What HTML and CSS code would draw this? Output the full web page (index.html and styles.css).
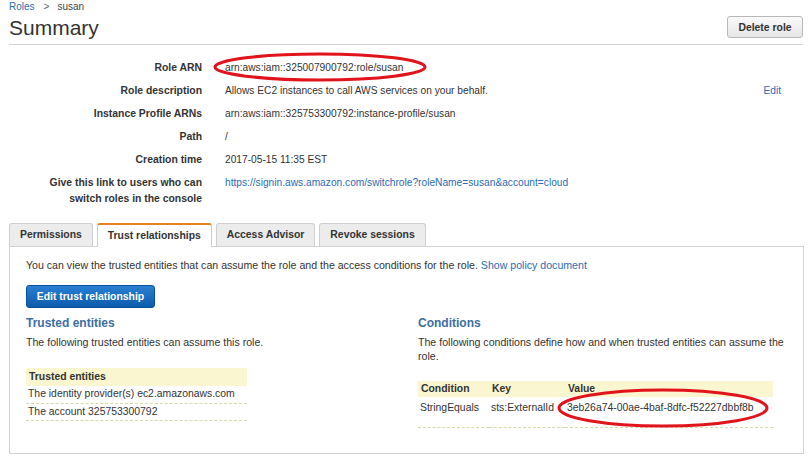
FILE: index.html
```html
<!DOCTYPE html>
<html lang="en">
<head>
<meta charset="utf-8">
<title>Summary</title>
<link rel="stylesheet" href="styles.css">
</head>
<body>
<div class="page">
  <div class="crumbs"><a class="link" href="#">Roles</a><span class="sep">&gt;</span><span>susan</span></div>
  <div class="title-row">
    <h1 class="title">Summary</h1>
    <button class="btn-gray">Delete role</button>
  </div>

  <div class="details">
    <div class="row"><div class="lbl">Role ARN</div><div class="val">arn:aws:iam::325007900792:role/susan</div><div class="act"></div></div>
    <div class="row"><div class="lbl">Role description</div><div class="val">Allows EC2 instances to call AWS services on your behalf.</div><div class="act"><a class="link" href="#">Edit</a></div></div>
    <div class="row"><div class="lbl">Instance Profile ARNs</div><div class="val">arn:aws:iam::325753300792:instance-profile/susan</div><div class="act"></div></div>
    <div class="row"><div class="lbl">Path</div><div class="val">/</div><div class="act"></div></div>
    <div class="row"><div class="lbl">Creation time</div><div class="val">2017-05-15 11:35 EST</div><div class="act"></div></div>
    <div class="row"><div class="lbl">Give this link to users who can switch roles in the console</div><div class="val"><a class="link" href="#">https://signin.aws.amazon.com/switchrole?roleName=susan&amp;account=cloud</a></div><div class="act"></div></div>
  </div>

  <div class="tabs">
    <div class="tab">Permissions</div>
    <div class="tab active">Trust relationships</div>
    <div class="tab">Access Advisor</div>
    <div class="tab">Revoke sessions</div>
  </div>
  <div class="panel">
    <p class="intro">You can view the trusted entities that can assume the role and the access conditions for the role. <a class="link" href="#">Show policy document</a></p>
    <button class="btn-blue">Edit trust relationship</button>
    <div class="cols">
      <div class="col">
        <h2 class="sub">Trusted entities</h2>
        <p class="desc">The following trusted entities can assume this role.</p>
        <table class="tbl tbl-left">
          <thead><tr><th>Trusted entities</th></tr></thead>
          <tbody>
            <tr><td>The identity provider(s) ec2.amazonaws.com</td></tr>
            <tr><td>The account 325753300792</td></tr>
          </tbody>
        </table>
      </div>
      <div class="col">
        <h2 class="sub">Conditions</h2>
        <p class="desc">The following conditions define how and when trusted entities can assume the role.</p>
        <table class="tbl tbl-right">
          <thead><tr><th class="c1">Condition</th><th class="c2">Key</th><th>Value</th></tr></thead>
          <tbody>
            <tr class="tall"><td>StringEquals</td><td>sts:ExternalId</td><td>3eb26a74-00ae-4baf-8dfc-f52227dbbf8b</td></tr>
          </tbody>
        </table>
      </div>
    </div>
  </div>
</div>
<svg class="marks" width="812" height="461" viewBox="0 0 812 461" aria-hidden="true">
  <ellipse cx="320" cy="67" rx="105" ry="13" fill="none" stroke="#e1141c" stroke-width="3"/>
  <ellipse cx="663" cy="408" rx="104" ry="18" fill="none" stroke="#e1141c" stroke-width="3"/>
</svg>
</body>
</html>
```
FILE: styles.css
```css
* { box-sizing: border-box; }
html, body { margin: 0; padding: 0; background: #fff; }
body {
  font-family: "Liberation Sans", Arial, Helvetica, sans-serif;
  font-size: 10.2px;
  color: #333;
  position: relative;
  width: 812px;
  height: 461px;
  overflow: hidden;
}
.page { padding: 0 9px; }
.link { color: #2b6cb6; text-decoration: none; }

.crumbs { font-size: 10px; line-height: 14px; height: 14px; color: #444; }
.crumbs .sep { margin: 0 8px 0 9px; color: #666; }

.title-row {
  display: flex;
  justify-content: space-between;
  align-items: center;
  height: 31px;
  border-bottom: 1px solid #d3d3d3;
}
.title { margin: 0; font-size: 21px; font-weight: normal; color: #333; line-height: 28px; position: relative; top: -1px; }
.btn-gray {
  font-family: inherit;
  font-size: 10.4px;
  font-weight: bold;
  color: #333;
  height: 22px;
  width: 76px;
  padding: 0;
  border: 1px solid #b8b8b8;
  border-radius: 3px;
  background: linear-gradient(#fafafa, #e6e6e6);
  position: relative;
  top: -2px;
}

.details { margin-top: 11px; }
.row {
  display: grid;
  grid-template-columns: 193px 1fr auto;
  column-gap: 23px;
  padding: 4px 22px 4px 0;
  line-height: 15px;
}
.row:last-child { line-height: 16px; padding-top: 4px; }
.lbl { font-weight: bold; font-size: 10.4px; text-align: right; color: #333; }
.row:last-child .lbl { padding-left: 36px; }
.val { color: #333; }

.tabs { display: flex; gap: 4px; margin-top: 12px; height: 23px; }
.tab {
  font-weight: bold;
  font-size: 10.4px;
  color: #333;
  background: #ececec;
  border: 1px solid #cfcfcf;
  border-bottom: none;
  border-radius: 3px 3px 0 0;
  padding: 0 10px;
  line-height: 22px;
  height: 23px;
}
.tab.active {
  background: #fff;
  border-top: 2px solid #e8801c;
  line-height: 21px;
  height: 24px;
  position: relative;
  z-index: 1;
}

.panel {
  border: 1px solid #d3d3d3;
  padding: 11px 16px 25px 16px;
  width: 795px;
  font-size: 10.6px;
}
.intro { margin: 0; line-height: 15px; }
.btn-blue {
  margin-top: 12px;
  font-family: inherit;
  font-size: 10.4px;
  font-weight: bold;
  color: #fff;
  height: 23px;
  width: 129px;
  padding: 0;
  border: 1px solid #0b4f98;
  border-radius: 3px;
  background: linear-gradient(#2a7fd2, #0c5cad);
  display: block;
}
.cols { display: grid; grid-template-columns: 392px 1fr; margin-top: 7px; }
.sub { margin: 0; font-size: 12px; line-height: 16px; color: #3d6ea4; font-weight: bold; }
.desc { margin: 4px 0 0; line-height: 14px; }
.col:last-child .desc { padding-right: 2px; }

.tbl { border-collapse: collapse; margin-top: 18px; font-size: 10.4px; }
.tbl th {
  background: #faf6cf;
  text-align: left;
  font-weight: bold;
  padding: 0 3px;
  height: 18px;
  line-height: 18px;
}
.tbl td {
  padding: 0 2px;
  height: 17px;
  line-height: 16px;
  border-bottom: 1px dashed #d9d9ab;
}
.tbl-left { width: 221px; margin-top: 19px; }
.tbl-right { width: 355px; }
.tbl-right th { height: 16px; line-height: 16px; }
.tbl-right .c1 { width: 71px; }
.tbl-right .c2 { width: 76px; }
.tbl-right tr.tall td { height: 30px; vertical-align: top; padding-top: 3px; }

.marks { position: absolute; left: 0; top: 0; pointer-events: none; }
```
